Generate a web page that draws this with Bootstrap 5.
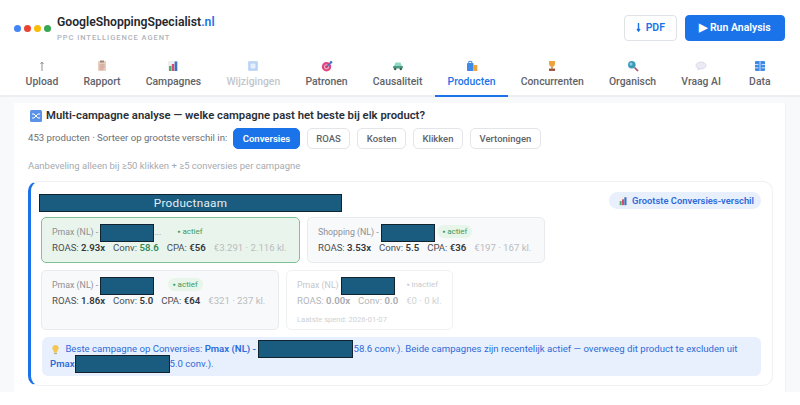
<!DOCTYPE html>
<html lang="nl">
<head>
    <meta charset="UTF-8">
    <meta name="viewport" content="width=device-width, initial-scale=1.0">
    <title>GoogleShoppingSpecialist.nl</title>
    <link rel="stylesheet" href="https://cdn.jsdelivr.net/npm/bootstrap@5.3.3/dist/css/bootstrap.min.css">
    <script src="https://cdn.jsdelivr.net/npm/bootstrap@5.3.3/dist/js/bootstrap.bundle.min.js"></script>
    <style>
        html, body { height: 405px; overflow: hidden; }
        body { font-family: Roboto, "Liberation Sans", sans-serif; background: #fff; color: #2b2f36; font-size: 10px; }

        .top-head { height: 97px; border-bottom: 2px solid #eceef1; background: #fff; }
        .brand-row { height: 50px; padding: 15px 15px 0 14px; }
        .logo-dots { gap: 3px; margin-right: 6px; height: 26px; }
        .logo-dot { width: 7px; height: 7px; border-radius: 50%; }
        .brand-name { font-size: 12.2px; font-weight: 600; line-height: 15px; color: #24282e; }
        .brand-name span { color: #1a73e8; }
        .brand-sub { font-size: 7.5px; font-weight: 500; letter-spacing: .95px; color: #b0b4ba; line-height: 10px; margin-top: 3px; }
        .btn-pdf, .btn-run { height: 26px; font-size: 10.5px; font-weight: 600; border-radius: 4px; padding: 0; line-height: 24px; }
        .btn-pdf { width: 53px; color: #1a73e8; background: #fff; border: 1px solid #dfe2e6; }
        .btn-run { width: 100px; color: #fff; background: #1a73e8; border: 1px solid #1a73e8; }
        .btn-pdf svg { vertical-align: -1px; margin-right: 2px; }

        .tab-row { padding-left: 13px; height: 47px; }
        .tab-item { height: 47px; padding: 10px 12.6px 0; text-align: center; color: #5f6368; font-size: 10.4px; font-weight: 500; line-height: 13px; white-space: nowrap; }
        .tab-item svg { display: block; margin: 0 auto 3px; width: 12px; height: 12px; }
        .tab-item.is-off { color: #c3c6cb; }
        .tab-item.is-on { color: #1a73e8; border-bottom: 2px solid #1a73e8; }
        .tab-item.is-last { margin-left: 3px; }

        .page-wrap { background: #f8f9fa; height: 295px; padding: 6px 14px 0 14px; }
        .panel-main { background: #fff; height: 289px; padding: 6px 13px 0 16px; border-right: 1px solid #f0f1f3; }
        .panel-title { font-size: 11.3px; font-weight: 600; line-height: 14px; color: #2b2f36; }
        .filter-row { margin-top: 5px; margin-left: -2px; height: 21px; font-size: 9.6px; color: #6b7076; }
        .filter-label { margin-right: 6px; }
        .chip-row { gap: 7px; }
        .chip-btn { height: 21px; padding: 0 8.5px; border: 1px solid #e3e5e8; border-radius: 5px; background: #fff; color: #5f6368; font-size: 9.5px; font-weight: 500; line-height: 19px; }
        .chip-btn.is-on { background: #1a73e8; border-color: #1a73e8; color: #fff; font-weight: 600; }
        .note-line { font-size: 9.5px; color: #a6aaaf; line-height: 12px; margin-top: 11px; margin-left: -2px; }

        .product-box { height: 205px; margin-top: 9px; margin-left: -2px; width: 745px; border: 1px solid #eff0f2; border-left: 3px solid #1a73e8; border-radius: 10px; padding: 12px 11px 0 8px; }
        .name-bar { width: 303px; height: 18px; background: #1a5c80; border: 1px solid #10232f; color: #e6eef3; font-size: 11.7px; letter-spacing: .3px; line-height: 17px; text-align: center; }
        .diff-badge { height: 17px; padding: 0 7px 0 9px; border-radius: 9px; background: #e8f0fd; color: #2f6bd8; font-size: 9.4px; font-weight: 600; line-height: 17px; margin-top: -2px; }

        .option-line { display: flex; gap: 7px; margin-left: 2px; }
        .option-box { background: #f8f9fa; border: 1px solid #e8eaed; border-radius: 5px; padding: 7px 10px 0; font-size: 9.6px; color: #4b4f55; }
        .option-box.is-best { background: #e9f5ec; border-color: #7fc296; }
        .option-box.is-dim { background: #fff; border-color: #f0f1f3; color: #b4b7bb; }
        .opt-name { font-size: 8.8px; color: #8c9096; line-height: 15px; height: 15px; white-space: nowrap; }
        .is-dim .opt-name { color: #c6c8cc; }
        .opt-stats { line-height: 14px; margin-top: 1px; white-space: nowrap; }
        .opt-stats b { font-weight: 600; color: #33373c; }
        .is-dim .opt-stats b { color: #a7aaaf; }
        .opt-stats b.good { color: #2e8b57; }
        .opt-stats span { margin-right: 8px; }
        .opt-stats i { font-style: normal; color: #b9bcc0; }
        .is-dim .opt-stats i { color: #d0d2d5; }
        .state-pill { display: inline-block; font-size: 8px; line-height: 13px; padding: 0 5px; border-radius: 7px; color: #3c9a5f; background: #e7f5ea; vertical-align: 1px; }
        .is-best .state-pill { background: transparent; }
        .is-dim .state-pill { color: #c9cbcf; background: transparent; }
        .state-pill em { font-style: normal; font-size: 5px; vertical-align: 1px; }
        .last-spend { font-size: 7.6px; color: #cfd1d4; line-height: 11px; margin-top: 6px; }

        .hide-bar { display: inline-block; height: 18px; background: #1a5c80; border: 1px solid #10232f; vertical-align: middle; margin: -4px 0; }
        .advice-box { height: 39px; margin-top: 7px; margin-left: 3px; background: #e8f0fd; border-radius: 6px; padding: 5px 8px; color: #2f6bd8; font-size: 9.6px; line-height: 14.5px; white-space: nowrap; }
        .advice-box b { font-weight: 600; }
        .advice-box svg { margin-right: 2px; }
    </style>
</head>
<body>
    <header class="top-head">
        <div class="brand-row d-flex justify-content-between">
            <div class="d-flex">
                <div class="logo-dots d-flex align-items-center">
                    <span class="logo-dot" style="background:#4285f4"></span>
                    <span class="logo-dot" style="background:#ea4335"></span>
                    <span class="logo-dot" style="background:#fbbc05"></span>
                    <span class="logo-dot" style="background:#34a853"></span>
                </div>
                <div>
                    <div class="brand-name">GoogleShoppingSpecialist<span>.nl</span></div>
                    <div class="brand-sub">PPC INTELLIGENCE AGENT</div>
                </div>
            </div>
            <div class="d-flex gap-2">
                <button class="btn btn-pdf"><svg width="5" height="10" viewBox="0 0 5 10"><path d="M2.500 1v8M1 7l1.500 2L4 7" fill="none" stroke="#1a73e8" stroke-width="1.400"/></svg> PDF</button>
                <button class="btn btn-run">▶ Run Analysis</button>
            </div>
        </div>
        <nav class="tab-row d-flex">
            <div class="tab-item"><svg viewBox="0 0 12 12"><path d="M6 11V3M4.500 4 6 2 7.500 4" fill="none" stroke="#8d9196" stroke-width="1"/></svg>Upload</div>
            <div class="tab-item"><svg viewBox="0 0 12 12"><rect x="2" y="1" width="8" height="10" rx="1" fill="#e9cdbd"/><rect x="4" y="0.500" width="4" height="2" fill="#9a8a80"/><path d="M3.500 5h5M3.500 7h5M3.500 9h4" stroke="#c08a80" stroke-width=".8"/></svg>Rapport</div>
            <div class="tab-item"><svg viewBox="0 0 12 12"><rect x="1" y="1" width="10" height="10" fill="#eef0ee"/><rect x="2" y="6" width="2.400" height="5" fill="#4caf6a"/><rect x="4.800" y="4" width="2.400" height="7" fill="#d9487a"/><rect x="7.600" y="1.500" width="2.600" height="9.500" fill="#3d6fc4"/></svg>Campagnes</div>
            <div class="tab-item is-off"><svg viewBox="0 0 12 12"><rect x="1" y="1" width="10" height="10" rx="1" fill="#c5dbf7"/><rect x="3" y="3" width="6" height="6" fill="#e6f0fc" stroke="#9fc2ee" stroke-width=".7"/></svg>Wijzigingen</div>
            <div class="tab-item"><svg viewBox="0 0 12 12"><circle cx="5.500" cy="6.800" r="4.700" fill="#e0457f"/><circle cx="5.500" cy="6.800" r="2.600" fill="#f2a0bd"/><circle cx="5.500" cy="6.800" r="1.200" fill="#c92f68"/><path d="M6 6.500 10 2.500" stroke="#3d78c8" stroke-width="1.400"/><circle cx="10" cy="2.300" r="1.300" fill="#3d78c8"/></svg>Patronen</div>
            <div class="tab-item"><svg viewBox="0 0 12 12"><path d="M3.500 2.500h5L10 6H2Z" fill="#8ed8c8"/><rect x="1" y="6" width="10" height="2.600" rx="1" fill="#4f9a80"/><circle cx="3.200" cy="9" r="1.200" fill="#34604f"/><circle cx="8.800" cy="9" r="1.200" fill="#34604f"/></svg>Causaliteit</div>
            <div class="tab-item is-on"><svg viewBox="0 0 12 12"><rect x="1" y="3" width="6.500" height="8" rx=".7" fill="#3f8ae6"/><path d="M2.800 3V1.400h3V3" fill="none" stroke="#3f8ae6"/><rect x="7.500" y="5" width="3.800" height="6" rx=".6" fill="#eda23c"/></svg>Producten</div>
            <div class="tab-item"><svg viewBox="0 0 12 12"><path d="M3 1h6v2.500c0 2-1.200 3.300-3 3.300S3 5.500 3 3.500Z" fill="#eda23c"/><rect x="5.200" y="6.500" width="1.600" height="2" fill="#c98a32"/><rect x="3" y="8.500" width="6" height="2.500" fill="#a0563f"/></svg>Concurrenten</div>
            <div class="tab-item"><svg viewBox="0 0 12 12"><circle cx="4.800" cy="4.800" r="3.800" fill="#3f9bb8"/><circle cx="4" cy="4" r="1.500" fill="#8ccbe0"/><path d="M7.500 7.500 11 11" stroke="#a84f6a" stroke-width="1.700"/></svg>Organisch</div>
            <div class="tab-item"><svg viewBox="0 0 12 12"><ellipse cx="6" cy="5.500" rx="5" ry="3.400" fill="#eceaf3" stroke="#d6cfe6" stroke-width=".7"/><path d="M3 8 2.500 10.500 5.500 8.800Z" fill="#d6cfe6"/></svg>Vraag AI</div>
            <div class="tab-item is-last"><svg viewBox="0 0 12 12"><rect x="1" y="1" width="10" height="10" rx="1" fill="#3f8ae6"/><path d="M6 1v10M1 4.500h3.500M7.500 4.500H11M1 7.800h3.500M7.500 7.800H11" stroke="#d5e6fa" stroke-width=".9"/></svg>Data</div>
        </nav>
    </header>

    <div class="page-wrap">
        <main class="panel-main">
            <div class="panel-title d-flex align-items-center gap-1">
                <svg width="12" height="12" viewBox="0 0 12 12"><rect width="12" height="12" rx="1.500" fill="#5b93e8"/><path d="M2 4h2l4 4h2M2 8h2l4-4h2" fill="none" stroke="#fff" stroke-width="1"/></svg>
                <span>Multi-campagne analyse — welke campagne past het beste bij elk product?</span>
            </div>
            <div class="filter-row d-flex align-items-center">
                <span class="filter-label">453 producten · Sorteer op grootste verschil in:</span>
                <div class="chip-row d-flex">
                    <button class="chip-btn is-on">Conversies</button>
                    <button class="chip-btn">ROAS</button>
                    <button class="chip-btn">Kosten</button>
                    <button class="chip-btn">Klikken</button>
                    <button class="chip-btn">Vertoningen</button>
                </div>
            </div>
            <div class="note-line">Aanbeveling alleen bij ≥50 klikken + ≥5 conversies per campagne</div>

            <section class="product-box">
                <div class="d-flex justify-content-between">
                    <div class="name-bar">Productnaam</div>
                    <div class="diff-badge d-flex align-items-center gap-1">
                        <svg width="10" height="10" viewBox="0 0 12 12"><rect x="1" y="1" width="10" height="10" fill="#eef0ee"/><rect x="2" y="6" width="2.400" height="5" fill="#4caf6a"/><rect x="4.800" y="4" width="2.400" height="7" fill="#d9487a"/><rect x="7.600" y="1.500" width="2.600" height="9.500" fill="#3d6fc4"/></svg>
                        <span>Grootste Conversies-verschil</span>
                    </div>
                </div>
                <div class="option-line" style="margin-top:5px">
                    <div class="option-box is-best" style="width:259px;height:46px">
                        <div class="opt-name">Pmax (NL) - <span class="hide-bar" style="width:54px"></span>... &nbsp;&nbsp;&nbsp;&nbsp;<span class="state-pill"><em>●</em> actief</span></div>
                        <div class="opt-stats"><span>ROAS: <b>2.93x</b></span><span>Conv: <b class="good">58.6</b></span><span>CPA: <b>€56</b></span><i>€3.291 · 2.116 kl.</i></div>
                    </div>
                    <div class="option-box" style="width:238px;height:46px">
                        <div class="opt-name">Shopping (NL) - <span class="hide-bar" style="width:54px"></span> <span class="state-pill"><em>●</em> actief</span></div>
                        <div class="opt-stats"><span>ROAS: <b>3.53x</b></span><span>Conv: <b>5.5</b></span><span>CPA: <b>€36</b></span><i>€197 · 167 kl.</i></div>
                    </div>
                </div>
                <div class="option-line" style="margin-top:7px">
                    <div class="option-box" style="width:238px;height:60px">
                        <div class="opt-name">Pmax (NL) - <span class="hide-bar" style="width:54px"></span> &nbsp;&nbsp;&nbsp;&nbsp;&nbsp;<span class="state-pill"><em>●</em> actief</span></div>
                        <div class="opt-stats"><span>ROAS: <b>1.86x</b></span><span>Conv: <b>5.0</b></span><span>CPA: <b>€64</b></span><i>€321 · 237 kl.</i></div>
                    </div>
                    <div class="option-box is-dim" style="width:167px;height:60px">
                        <div class="opt-name">Pmax (NL) <span class="hide-bar" style="width:54px"></span> &nbsp;&nbsp;<span class="state-pill"><em>●</em> inactief</span></div>
                        <div class="opt-stats"><span>ROAS: <b>0.00x</b></span><span>Conv: <b>0.0</b></span><i>€0 · 0 kl.</i></div>
                        <div class="last-spend">Laatste spend: 2026-01-07</div>
                    </div>
                </div>
                <div class="advice-box">
                    <div><svg width="11" height="11" viewBox="0 0 12 12"><path d="M6 1a3.500 3.500 0 0 0-2 6.400V9h4V7.400A3.500 3.500 0 0 0 6 1Z" fill="#f4c64f"/><rect x="4.500" y="9.500" width="3" height="1.500" fill="#b9a67a"/></svg> Beste campagne op Conversies: <b>Pmax (NL) -</b> <span class="hide-bar" style="width:95px"></span>58.6 conv.). Beide campagnes zijn recentelijk actief — overweeg dit product te excluden uit</div>
                    <div><b>Pmax</b><span class="hide-bar" style="width:95px"></span>5.0 conv.).</div>
                </div>
            </section>
        </main>
    </div>
</body>
</html>
